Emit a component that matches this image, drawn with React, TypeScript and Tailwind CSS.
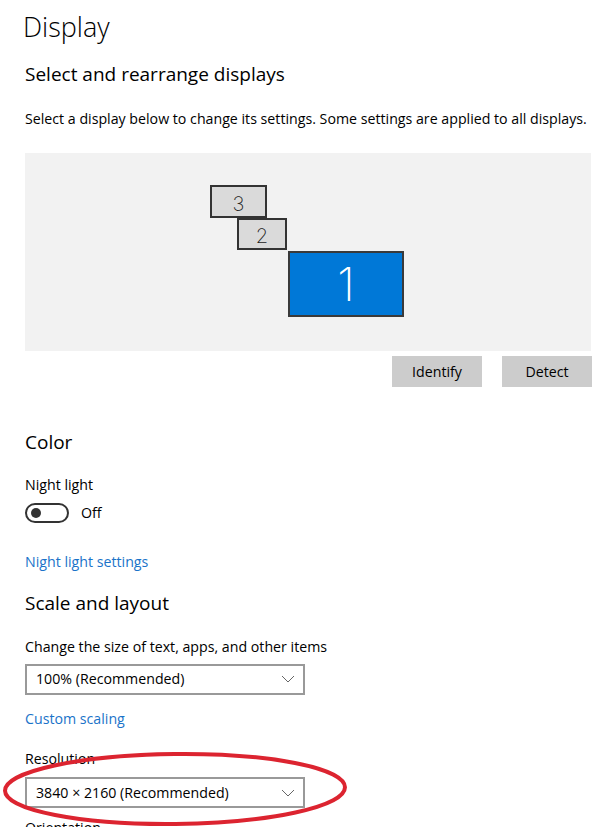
// Windows 10 Settings — Display page (mock of the reference shot)
import type { ReactNode } from 'react';

type Monitor = { id: number; left: number; top: number; w: number; h: number; active?: boolean };

// positions inside the arrangement canvas are the content itself
const MONITORS: Monitor[] = [
  { id: 3, left: 185, top: 32, w: 57, h: 33 },
  { id: 2, left: 212, top: 65, w: 50, h: 32 },
  { id: 1, left: 263, top: 98, w: 116, h: 66, active: true },
];

function Chevron() {
  return (
    <svg width="14" height="8" viewBox="0 0 14 8" fill="none" className="shrink-0">
      <path d="M1 1l6 6 6-6" stroke="#666" strokeWidth="1" />
    </svg>
  );
}

function Dropdown({ value, className = '' }: { value: string; className?: string }) {
  return (
    <div
      className={`flex h-[31px] w-[280px] items-center justify-between border-2 border-[#999] pl-[9px] pr-[8px] text-[14.2px] leading-none ${className}`}
    >
      <span>{value}</span>
      <Chevron />
    </div>
  );
}

function SectionTitle({ children, className = '' }: { children: ReactNode; className?: string }) {
  return <h2 className={`text-[19px] leading-none ${className}`}>{children}</h2>;
}

export default function App() {
  return (
    <div className="relative h-[827px] w-[610px] overflow-hidden bg-white font-['Open_Sans','Noto_Sans',sans-serif] text-black">
      <div className="flex flex-col pl-[25px]">
        <h1 className="-ml-[2px] mt-[13px] text-[27px] font-light leading-none">Display</h1>
        <SectionTitle className="mt-[25px]">Select and rearrange displays</SectionTitle>
        <p className="mt-[28px] whitespace-nowrap text-[14.2px] leading-none">
          Select a display below to change its settings. Some settings are applied to all displays.
        </p>

        <div className="relative mt-[27px] h-[198px] w-[566px] bg-[#f2f2f2]">
          {MONITORS.map((m) => (
            <div
              key={m.id}
              className={`absolute flex items-center justify-center border-2 font-['Inter','Lato',sans-serif] font-extralight leading-none ${
                m.active
                  ? 'border-[#3a3a3a] bg-[#0078d7] text-[46px] text-white'
                  : 'border-[#333] bg-[#dadada] pt-[4px] text-[20px] text-[#222]'
              }`}
              style={{ left: m.left, top: m.top, width: m.w, height: m.h }}
            >
              {m.id}
            </div>
          ))}
        </div>

        <div className="mt-[5px] flex w-[567px] justify-end gap-[20px]">
          <button type="button" className="h-[31px] w-[90px] bg-[#cccccc] text-[14.2px] leading-none">
            Identify
          </button>
          <button type="button" className="h-[31px] w-[90px] bg-[#cccccc] text-[14.2px] leading-none">
            Detect
          </button>
        </div>

        <SectionTitle className="mt-[46px]">Color</SectionTitle>
        <p className="mt-[26px] text-[14.2px] leading-none">Night light</p>
        <div className="mt-[11px] flex items-center gap-[12px]">
          <div className="flex h-[20px] w-[44px] items-center rounded-full border-2 border-[#333] pl-[4px]">
            <div className="h-[10px] w-[10px] rounded-full bg-[#333]" />
          </div>
          <span className="text-[14.2px] leading-none">Off</span>
        </div>
        <a className="mt-[32px] text-[14.2px] leading-none text-[#1a73c9]">Night light settings</a>

        <SectionTitle className="mt-[24px]">Scale and layout</SectionTitle>
        <p className="mt-[27px] text-[14.2px] leading-none">Change the size of text, apps, and other items</p>
        <Dropdown value="100% (Recommended)" className="mt-[10px]" />
        <a className="mt-[17px] text-[14.2px] leading-none text-[#1a73c9]">Custom scaling</a>

        <p className="mt-[26px] text-[14.2px] leading-none">Resolution</p>
        <Dropdown value="3840 × 2160 (Recommended)" className="mt-[11px] h-[30px]" />
        <p className="mt-[13px] text-[14.2px] leading-none">Orientation</p>
      </div>

      {/* red marker ring drawn over the resolution picker */}
      <svg
        className="pointer-events-none absolute left-0 top-[745px]"
        width="380"
        height="85"
        viewBox="0 0 380 85"
        fill="none"
      >
        <ellipse cx="175" cy="44" rx="170" ry="35" stroke="#dc2430" strokeWidth="4" transform="rotate(-0.6 175 44)" />
      </svg>
    </div>
  );
}
